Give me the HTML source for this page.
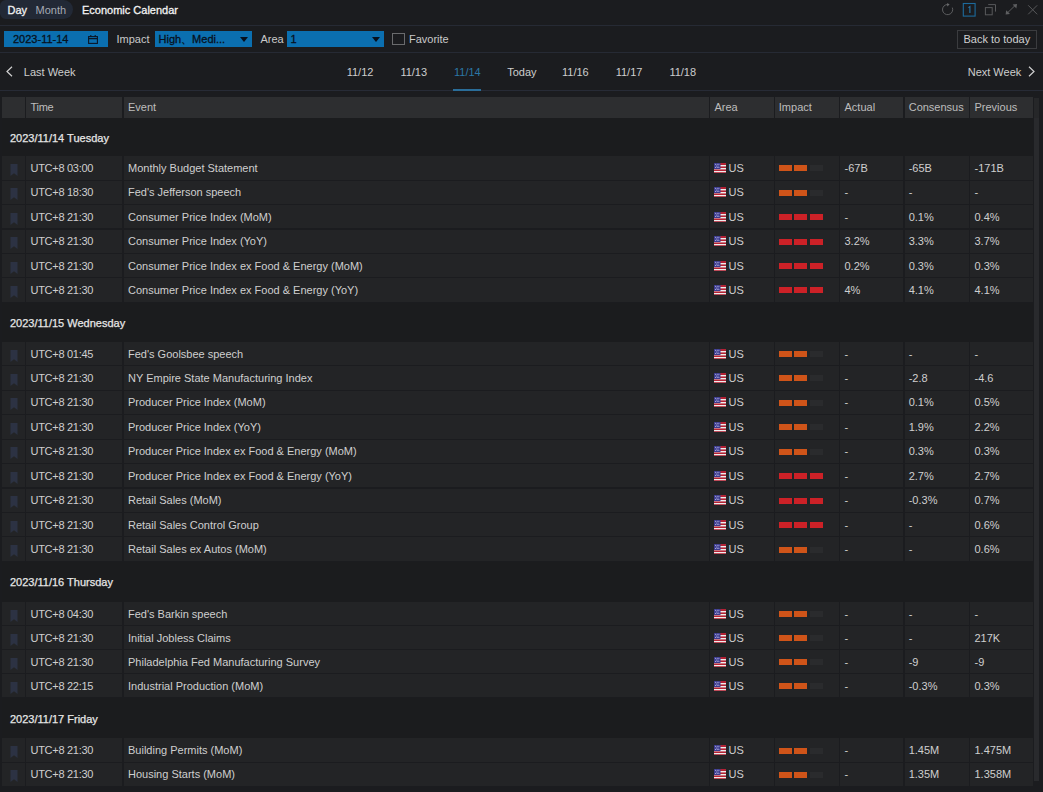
<!DOCTYPE html>
<html><head><meta charset="utf-8">
<style>
*{margin:0;padding:0;box-sizing:border-box}
html,body{width:1043px;height:792px;overflow:hidden;background:#1b1c1f;font-family:"Liberation Sans",sans-serif;font-size:11px;color:#cfcfcf}
.abs{position:absolute}
.hl{position:absolute;left:0;width:1043px;height:1px}
.pill{position:absolute;left:0;top:0;width:73px;height:19px;border-radius:6px 10px 10px 6px;background:#222936}
.tx{position:absolute;white-space:nowrap;line-height:13px}
.inp{position:absolute;background:#0b6fb0;height:16px;top:31px}
.inp .tx{color:#0b1a2e}
.tri{position:absolute;width:0;height:0;border-left:4px solid transparent;border-right:4px solid transparent;border-top:5px solid #07111e}
.tab{position:absolute;top:65.5px;white-space:nowrap;line-height:13px;color:#cdcdcd}
.hdr{position:absolute;top:97px;height:20.5px;left:0;width:1034px}
.hdr .c{background:#2d2e30;color:#bdbdbd}
.grp{position:absolute;left:2px;width:1031px;background:#1b1c1e}
.grp span{position:absolute;left:8px;line-height:14px;color:#e6e6e6;-webkit-text-stroke:0.25px #e6e6e6;white-space:nowrap}
.row{position:absolute;left:0;width:1034px}
.c{position:absolute;top:0;bottom:1px;background:#232426;white-space:nowrap;display:flex;align-items:center;padding-left:4.5px}
.hdr .c{bottom:0;padding-bottom:1.5px}
.c0{left:2px;width:23px}
.c1{left:26px;width:96px}
.c2{left:123.5px;width:585.5px}
.c3{left:710px;width:64px}
.c4{left:775px;width:64px}
.c5{left:840px;width:63px}
.c6{left:905px;width:64px;padding-left:3.7px}
.c7{left:970px;width:63px}
.c0 .bm{margin-left:3.5px;margin-top:4px}
.c1{letter-spacing:-0.28px}
.flag{margin-right:3px;margin-left:-1px;flex:none}
.c4{padding-left:3.8px}
.c4 i{display:inline-block;width:13px;height:6px;margin-right:2.5px;margin-top:1px}
.c4 i.o{background:#cf5419}
.c4 i.r{background:#cc2127}
.c4 i.g{background:#2a2b2d}
.sb{position:absolute;left:1034px;width:5px;background:#292a2d}
</style></head><body>
<!-- top bar -->
<div class="pill"></div>
<div class="tx" style="left:7.5px;top:4px;color:#f0f0f0;-webkit-text-stroke:0.3px #f0f0f0">Day</div>
<div class="tx" style="left:35.5px;top:4px;color:#a6aab4">Month</div>
<div class="tx" style="left:82px;top:4px;color:#f2f2f2;-webkit-text-stroke:0.3px #f2f2f2">Economic Calendar</div>
<svg class="abs" style="left:935px;top:0" width="108" height="20" viewBox="0 0 108 20">
 <path d="M17.3 7.6 A5.1 5.1 0 1 1 13 4.5" fill="none" stroke="#5c5d5f" stroke-width="1"/>
 <path d="M12.2 3 L14.6 4.6 L12.2 6.4 Z" fill="#6a6b6d"/>
 <rect x="28.3" y="3.5" width="11.8" height="12.6" fill="none" stroke="#1d6a9c" stroke-width="1.1"/>
 <path d="M33.4 7.6 L34.9 6.6 V13" fill="none" stroke="#2577ab" stroke-width="1.1"/>
 <rect x="50.4" y="7.6" width="6.8" height="7.2" fill="none" stroke="#58595b" stroke-width="1"/>
 <path d="M53.2 4.6 H60.5 V11.6" fill="none" stroke="#58595b" stroke-width="1"/>
 <path d="M72.5 12.8 L80 5.6" stroke="#5a5b5d" stroke-width="1"/>
 <path d="M82 4 L81.4 8.4 L77.6 4.6 Z" fill="#5e5f61"/>
 <path d="M70.6 14.6 L71.2 10.2 L75 14 Z" fill="#5e5f61"/>
 <path d="M93.2 5.3 L102.2 14.3 M102.2 5.3 L93.2 14.3" stroke="#58595b" stroke-width="1"/>
</svg>
<div class="hl" style="top:25px;background:#262a34"></div>
<!-- toolbar -->
<div class="inp" style="left:4px;width:104px"></div>
<div class="tx" style="left:13px;top:33px;color:#07111e;-webkit-text-stroke:0.3px #07111e">2023-11-14</div>
<svg class="abs" style="left:88px;top:35px" width="10" height="9" viewBox="0 0 10 9"><rect x="0.6" y="1.6" width="8.8" height="6.8" fill="none" stroke="#0b1626" stroke-width="1.1"/><path d="M0.6 3.6 H9.4 M2.8 0 V2 M7.2 0 V2" stroke="#0b1626" stroke-width="1.1"/></svg>
<div class="tx" style="left:116.5px;top:33px;color:#c9c9c9">Impact</div>
<div class="inp" style="left:155px;width:97px"></div>
<div class="tx" style="left:158.5px;top:33px;color:#07111e;-webkit-text-stroke:0.3px #07111e">High、Medi...</div>
<div class="tri" style="left:239.5px;top:37px"></div>
<div class="tx" style="left:260.5px;top:33px;color:#c9c9c9">Area</div>
<div class="inp" style="left:287px;width:97px"></div>
<div class="tx" style="left:290.5px;top:33px;color:#07111e;-webkit-text-stroke:0.3px #07111e">1</div>
<div class="tri" style="left:372px;top:37px"></div>
<div class="abs" style="left:392px;top:33px;width:13px;height:12px;border:1px solid #6a6b6d"></div>
<div class="tx" style="left:409px;top:33px;color:#c9c9c9">Favorite</div>
<div class="abs" style="left:957px;top:30px;width:80px;height:19px;border:1px solid #3b3c3f"></div>
<div class="tx" style="left:963.5px;top:33px;color:#d0d0d0">Back to today</div>
<div class="hl" style="top:52px;background:#262a34"></div>
<!-- nav -->
<svg class="abs" style="left:5px;top:66px" width="9" height="11" viewBox="0 0 9 11"><path d="M7 0.8 L2 5.5 L7 10.2" fill="none" stroke="#d0d0d0" stroke-width="1.2"/></svg>
<div class="tab" style="left:23.8px">Last Week</div>
<div class="tab" style="left:346.7px">11/12</div>
<div class="tab" style="left:400.4px">11/13</div>
<div class="tab" style="left:454px;color:#2b77a6">11/14</div>
<div class="tab" style="left:507.2px">Today</div>
<div class="tab" style="left:562px">11/16</div>
<div class="tab" style="left:615.7px">11/17</div>
<div class="tab" style="left:669.4px">11/18</div>
<div class="tab" style="left:967.7px">Next Week</div>
<svg class="abs" style="left:1027px;top:66px" width="9" height="11" viewBox="0 0 9 11"><path d="M2 0.8 L7 5.5 L2 10.2" fill="none" stroke="#d0d0d0" stroke-width="1.2"/></svg>
<div class="hl" style="top:90px;background:#272b36"></div>
<div class="abs" style="left:453px;top:89px;width:28px;height:2px;background:#2a6d99"></div>
<!-- table header -->
<div class="hdr">
 <div class="c c0"></div>
 <div class="c c1">Time</div>
 <div class="c c2">Event</div>
 <div class="c c3">Area</div>
 <div class="c c4">Impact</div>
 <div class="c c5">Actual</div>
 <div class="c c6">Consensus</div>
 <div class="c c7">Previous</div>
</div>
<div class="sb" style="top:97.5px;height:20px;background:#262729"></div>
<div class="sb" style="top:117.5px;height:663px"></div>
<div class="grp" style="top:117.50px;height:38.80px"><span style="top:13.00px">2023/11/14 Tuesday</span></div>
<div class="row" style="top:156.30px;height:24.40px"><div class="c c0"><svg class="bm" width="8" height="12" viewBox="0 0 8 12"><path d="M0.5 0H7.5V12L4 9.3L0.5 12Z" fill="#2c3243"/></svg></div><div class="c c1">UTC+8 03:00</div><div class="c c2">Monthly Budget Statement</div><div class="c c3"><svg class="flag" width="12" height="10" viewBox="0 0 12 10"><rect width="12" height="10" fill="#b22234"/><rect y="2" width="12" height="1.4" fill="#eee"/><rect y="5" width="12" height="1.4" fill="#eee"/><rect y="8" width="12" height="1.2" fill="#eee"/><rect width="6.5" height="6" fill="#3c3b8e"/><g fill="#c9c9f0"><circle cx="1.5" cy="1.3" r=".5"/><circle cx="3.2" cy="1.3" r=".5"/><circle cx="4.9" cy="1.3" r=".5"/><circle cx="2.3" cy="3" r=".5"/><circle cx="4" cy="3" r=".5"/><circle cx="1.5" cy="4.6" r=".5"/><circle cx="3.2" cy="4.6" r=".5"/><circle cx="4.9" cy="4.6" r=".5"/></g></svg><span>US</span></div><div class="c c4"><i class="o"></i><i class="o"></i><i class="g"></i></div><div class="c c5">-67B</div><div class="c c6">-65B</div><div class="c c7">-171B</div></div>
<div class="row" style="top:180.70px;height:24.40px"><div class="c c0"><svg class="bm" width="8" height="12" viewBox="0 0 8 12"><path d="M0.5 0H7.5V12L4 9.3L0.5 12Z" fill="#2c3243"/></svg></div><div class="c c1">UTC+8 18:30</div><div class="c c2">Fed's Jefferson speech</div><div class="c c3"><svg class="flag" width="12" height="10" viewBox="0 0 12 10"><rect width="12" height="10" fill="#b22234"/><rect y="2" width="12" height="1.4" fill="#eee"/><rect y="5" width="12" height="1.4" fill="#eee"/><rect y="8" width="12" height="1.2" fill="#eee"/><rect width="6.5" height="6" fill="#3c3b8e"/><g fill="#c9c9f0"><circle cx="1.5" cy="1.3" r=".5"/><circle cx="3.2" cy="1.3" r=".5"/><circle cx="4.9" cy="1.3" r=".5"/><circle cx="2.3" cy="3" r=".5"/><circle cx="4" cy="3" r=".5"/><circle cx="1.5" cy="4.6" r=".5"/><circle cx="3.2" cy="4.6" r=".5"/><circle cx="4.9" cy="4.6" r=".5"/></g></svg><span>US</span></div><div class="c c4"><i class="o"></i><i class="o"></i><i class="g"></i></div><div class="c c5">-</div><div class="c c6">-</div><div class="c c7">-</div></div>
<div class="row" style="top:205.10px;height:24.40px"><div class="c c0"><svg class="bm" width="8" height="12" viewBox="0 0 8 12"><path d="M0.5 0H7.5V12L4 9.3L0.5 12Z" fill="#2c3243"/></svg></div><div class="c c1">UTC+8 21:30</div><div class="c c2">Consumer Price Index (MoM)</div><div class="c c3"><svg class="flag" width="12" height="10" viewBox="0 0 12 10"><rect width="12" height="10" fill="#b22234"/><rect y="2" width="12" height="1.4" fill="#eee"/><rect y="5" width="12" height="1.4" fill="#eee"/><rect y="8" width="12" height="1.2" fill="#eee"/><rect width="6.5" height="6" fill="#3c3b8e"/><g fill="#c9c9f0"><circle cx="1.5" cy="1.3" r=".5"/><circle cx="3.2" cy="1.3" r=".5"/><circle cx="4.9" cy="1.3" r=".5"/><circle cx="2.3" cy="3" r=".5"/><circle cx="4" cy="3" r=".5"/><circle cx="1.5" cy="4.6" r=".5"/><circle cx="3.2" cy="4.6" r=".5"/><circle cx="4.9" cy="4.6" r=".5"/></g></svg><span>US</span></div><div class="c c4"><i class="r"></i><i class="r"></i><i class="r"></i></div><div class="c c5">-</div><div class="c c6">0.1%</div><div class="c c7">0.4%</div></div>
<div class="row" style="top:229.50px;height:24.40px"><div class="c c0"><svg class="bm" width="8" height="12" viewBox="0 0 8 12"><path d="M0.5 0H7.5V12L4 9.3L0.5 12Z" fill="#2c3243"/></svg></div><div class="c c1">UTC+8 21:30</div><div class="c c2">Consumer Price Index (YoY)</div><div class="c c3"><svg class="flag" width="12" height="10" viewBox="0 0 12 10"><rect width="12" height="10" fill="#b22234"/><rect y="2" width="12" height="1.4" fill="#eee"/><rect y="5" width="12" height="1.4" fill="#eee"/><rect y="8" width="12" height="1.2" fill="#eee"/><rect width="6.5" height="6" fill="#3c3b8e"/><g fill="#c9c9f0"><circle cx="1.5" cy="1.3" r=".5"/><circle cx="3.2" cy="1.3" r=".5"/><circle cx="4.9" cy="1.3" r=".5"/><circle cx="2.3" cy="3" r=".5"/><circle cx="4" cy="3" r=".5"/><circle cx="1.5" cy="4.6" r=".5"/><circle cx="3.2" cy="4.6" r=".5"/><circle cx="4.9" cy="4.6" r=".5"/></g></svg><span>US</span></div><div class="c c4"><i class="r"></i><i class="r"></i><i class="r"></i></div><div class="c c5">3.2%</div><div class="c c6">3.3%</div><div class="c c7">3.7%</div></div>
<div class="row" style="top:253.90px;height:24.40px"><div class="c c0"><svg class="bm" width="8" height="12" viewBox="0 0 8 12"><path d="M0.5 0H7.5V12L4 9.3L0.5 12Z" fill="#2c3243"/></svg></div><div class="c c1">UTC+8 21:30</div><div class="c c2">Consumer Price Index ex Food &amp; Energy (MoM)</div><div class="c c3"><svg class="flag" width="12" height="10" viewBox="0 0 12 10"><rect width="12" height="10" fill="#b22234"/><rect y="2" width="12" height="1.4" fill="#eee"/><rect y="5" width="12" height="1.4" fill="#eee"/><rect y="8" width="12" height="1.2" fill="#eee"/><rect width="6.5" height="6" fill="#3c3b8e"/><g fill="#c9c9f0"><circle cx="1.5" cy="1.3" r=".5"/><circle cx="3.2" cy="1.3" r=".5"/><circle cx="4.9" cy="1.3" r=".5"/><circle cx="2.3" cy="3" r=".5"/><circle cx="4" cy="3" r=".5"/><circle cx="1.5" cy="4.6" r=".5"/><circle cx="3.2" cy="4.6" r=".5"/><circle cx="4.9" cy="4.6" r=".5"/></g></svg><span>US</span></div><div class="c c4"><i class="r"></i><i class="r"></i><i class="r"></i></div><div class="c c5">0.2%</div><div class="c c6">0.3%</div><div class="c c7">0.3%</div></div>
<div class="row" style="top:278.30px;height:24.40px"><div class="c c0"><svg class="bm" width="8" height="12" viewBox="0 0 8 12"><path d="M0.5 0H7.5V12L4 9.3L0.5 12Z" fill="#2c3243"/></svg></div><div class="c c1">UTC+8 21:30</div><div class="c c2">Consumer Price Index ex Food &amp; Energy (YoY)</div><div class="c c3"><svg class="flag" width="12" height="10" viewBox="0 0 12 10"><rect width="12" height="10" fill="#b22234"/><rect y="2" width="12" height="1.4" fill="#eee"/><rect y="5" width="12" height="1.4" fill="#eee"/><rect y="8" width="12" height="1.2" fill="#eee"/><rect width="6.5" height="6" fill="#3c3b8e"/><g fill="#c9c9f0"><circle cx="1.5" cy="1.3" r=".5"/><circle cx="3.2" cy="1.3" r=".5"/><circle cx="4.9" cy="1.3" r=".5"/><circle cx="2.3" cy="3" r=".5"/><circle cx="4" cy="3" r=".5"/><circle cx="1.5" cy="4.6" r=".5"/><circle cx="3.2" cy="4.6" r=".5"/><circle cx="4.9" cy="4.6" r=".5"/></g></svg><span>US</span></div><div class="c c4"><i class="r"></i><i class="r"></i><i class="r"></i></div><div class="c c5">4%</div><div class="c c6">4.1%</div><div class="c c7">4.1%</div></div>
<div class="grp" style="top:302.50px;height:39.30px"><span style="top:13.00px">2023/11/15 Wednesday</span></div>
<div class="row" style="top:341.80px;height:24.45px"><div class="c c0"><svg class="bm" width="8" height="12" viewBox="0 0 8 12"><path d="M0.5 0H7.5V12L4 9.3L0.5 12Z" fill="#2c3243"/></svg></div><div class="c c1">UTC+8 01:45</div><div class="c c2">Fed's Goolsbee speech</div><div class="c c3"><svg class="flag" width="12" height="10" viewBox="0 0 12 10"><rect width="12" height="10" fill="#b22234"/><rect y="2" width="12" height="1.4" fill="#eee"/><rect y="5" width="12" height="1.4" fill="#eee"/><rect y="8" width="12" height="1.2" fill="#eee"/><rect width="6.5" height="6" fill="#3c3b8e"/><g fill="#c9c9f0"><circle cx="1.5" cy="1.3" r=".5"/><circle cx="3.2" cy="1.3" r=".5"/><circle cx="4.9" cy="1.3" r=".5"/><circle cx="2.3" cy="3" r=".5"/><circle cx="4" cy="3" r=".5"/><circle cx="1.5" cy="4.6" r=".5"/><circle cx="3.2" cy="4.6" r=".5"/><circle cx="4.9" cy="4.6" r=".5"/></g></svg><span>US</span></div><div class="c c4"><i class="o"></i><i class="o"></i><i class="g"></i></div><div class="c c5">-</div><div class="c c6">-</div><div class="c c7">-</div></div>
<div class="row" style="top:366.25px;height:24.45px"><div class="c c0"><svg class="bm" width="8" height="12" viewBox="0 0 8 12"><path d="M0.5 0H7.5V12L4 9.3L0.5 12Z" fill="#2c3243"/></svg></div><div class="c c1">UTC+8 21:30</div><div class="c c2">NY Empire State Manufacturing Index</div><div class="c c3"><svg class="flag" width="12" height="10" viewBox="0 0 12 10"><rect width="12" height="10" fill="#b22234"/><rect y="2" width="12" height="1.4" fill="#eee"/><rect y="5" width="12" height="1.4" fill="#eee"/><rect y="8" width="12" height="1.2" fill="#eee"/><rect width="6.5" height="6" fill="#3c3b8e"/><g fill="#c9c9f0"><circle cx="1.5" cy="1.3" r=".5"/><circle cx="3.2" cy="1.3" r=".5"/><circle cx="4.9" cy="1.3" r=".5"/><circle cx="2.3" cy="3" r=".5"/><circle cx="4" cy="3" r=".5"/><circle cx="1.5" cy="4.6" r=".5"/><circle cx="3.2" cy="4.6" r=".5"/><circle cx="4.9" cy="4.6" r=".5"/></g></svg><span>US</span></div><div class="c c4"><i class="o"></i><i class="o"></i><i class="g"></i></div><div class="c c5">-</div><div class="c c6">-2.8</div><div class="c c7">-4.6</div></div>
<div class="row" style="top:390.70px;height:24.45px"><div class="c c0"><svg class="bm" width="8" height="12" viewBox="0 0 8 12"><path d="M0.5 0H7.5V12L4 9.3L0.5 12Z" fill="#2c3243"/></svg></div><div class="c c1">UTC+8 21:30</div><div class="c c2">Producer Price Index (MoM)</div><div class="c c3"><svg class="flag" width="12" height="10" viewBox="0 0 12 10"><rect width="12" height="10" fill="#b22234"/><rect y="2" width="12" height="1.4" fill="#eee"/><rect y="5" width="12" height="1.4" fill="#eee"/><rect y="8" width="12" height="1.2" fill="#eee"/><rect width="6.5" height="6" fill="#3c3b8e"/><g fill="#c9c9f0"><circle cx="1.5" cy="1.3" r=".5"/><circle cx="3.2" cy="1.3" r=".5"/><circle cx="4.9" cy="1.3" r=".5"/><circle cx="2.3" cy="3" r=".5"/><circle cx="4" cy="3" r=".5"/><circle cx="1.5" cy="4.6" r=".5"/><circle cx="3.2" cy="4.6" r=".5"/><circle cx="4.9" cy="4.6" r=".5"/></g></svg><span>US</span></div><div class="c c4"><i class="o"></i><i class="o"></i><i class="g"></i></div><div class="c c5">-</div><div class="c c6">0.1%</div><div class="c c7">0.5%</div></div>
<div class="row" style="top:415.15px;height:24.45px"><div class="c c0"><svg class="bm" width="8" height="12" viewBox="0 0 8 12"><path d="M0.5 0H7.5V12L4 9.3L0.5 12Z" fill="#2c3243"/></svg></div><div class="c c1">UTC+8 21:30</div><div class="c c2">Producer Price Index (YoY)</div><div class="c c3"><svg class="flag" width="12" height="10" viewBox="0 0 12 10"><rect width="12" height="10" fill="#b22234"/><rect y="2" width="12" height="1.4" fill="#eee"/><rect y="5" width="12" height="1.4" fill="#eee"/><rect y="8" width="12" height="1.2" fill="#eee"/><rect width="6.5" height="6" fill="#3c3b8e"/><g fill="#c9c9f0"><circle cx="1.5" cy="1.3" r=".5"/><circle cx="3.2" cy="1.3" r=".5"/><circle cx="4.9" cy="1.3" r=".5"/><circle cx="2.3" cy="3" r=".5"/><circle cx="4" cy="3" r=".5"/><circle cx="1.5" cy="4.6" r=".5"/><circle cx="3.2" cy="4.6" r=".5"/><circle cx="4.9" cy="4.6" r=".5"/></g></svg><span>US</span></div><div class="c c4"><i class="o"></i><i class="o"></i><i class="g"></i></div><div class="c c5">-</div><div class="c c6">1.9%</div><div class="c c7">2.2%</div></div>
<div class="row" style="top:439.60px;height:24.45px"><div class="c c0"><svg class="bm" width="8" height="12" viewBox="0 0 8 12"><path d="M0.5 0H7.5V12L4 9.3L0.5 12Z" fill="#2c3243"/></svg></div><div class="c c1">UTC+8 21:30</div><div class="c c2">Producer Price Index ex Food &amp; Energy (MoM)</div><div class="c c3"><svg class="flag" width="12" height="10" viewBox="0 0 12 10"><rect width="12" height="10" fill="#b22234"/><rect y="2" width="12" height="1.4" fill="#eee"/><rect y="5" width="12" height="1.4" fill="#eee"/><rect y="8" width="12" height="1.2" fill="#eee"/><rect width="6.5" height="6" fill="#3c3b8e"/><g fill="#c9c9f0"><circle cx="1.5" cy="1.3" r=".5"/><circle cx="3.2" cy="1.3" r=".5"/><circle cx="4.9" cy="1.3" r=".5"/><circle cx="2.3" cy="3" r=".5"/><circle cx="4" cy="3" r=".5"/><circle cx="1.5" cy="4.6" r=".5"/><circle cx="3.2" cy="4.6" r=".5"/><circle cx="4.9" cy="4.6" r=".5"/></g></svg><span>US</span></div><div class="c c4"><i class="o"></i><i class="o"></i><i class="g"></i></div><div class="c c5">-</div><div class="c c6">0.3%</div><div class="c c7">0.3%</div></div>
<div class="row" style="top:464.05px;height:24.45px"><div class="c c0"><svg class="bm" width="8" height="12" viewBox="0 0 8 12"><path d="M0.5 0H7.5V12L4 9.3L0.5 12Z" fill="#2c3243"/></svg></div><div class="c c1">UTC+8 21:30</div><div class="c c2">Producer Price Index ex Food &amp; Energy (YoY)</div><div class="c c3"><svg class="flag" width="12" height="10" viewBox="0 0 12 10"><rect width="12" height="10" fill="#b22234"/><rect y="2" width="12" height="1.4" fill="#eee"/><rect y="5" width="12" height="1.4" fill="#eee"/><rect y="8" width="12" height="1.2" fill="#eee"/><rect width="6.5" height="6" fill="#3c3b8e"/><g fill="#c9c9f0"><circle cx="1.5" cy="1.3" r=".5"/><circle cx="3.2" cy="1.3" r=".5"/><circle cx="4.9" cy="1.3" r=".5"/><circle cx="2.3" cy="3" r=".5"/><circle cx="4" cy="3" r=".5"/><circle cx="1.5" cy="4.6" r=".5"/><circle cx="3.2" cy="4.6" r=".5"/><circle cx="4.9" cy="4.6" r=".5"/></g></svg><span>US</span></div><div class="c c4"><i class="r"></i><i class="r"></i><i class="r"></i></div><div class="c c5">-</div><div class="c c6">2.7%</div><div class="c c7">2.7%</div></div>
<div class="row" style="top:488.50px;height:24.45px"><div class="c c0"><svg class="bm" width="8" height="12" viewBox="0 0 8 12"><path d="M0.5 0H7.5V12L4 9.3L0.5 12Z" fill="#2c3243"/></svg></div><div class="c c1">UTC+8 21:30</div><div class="c c2">Retail Sales (MoM)</div><div class="c c3"><svg class="flag" width="12" height="10" viewBox="0 0 12 10"><rect width="12" height="10" fill="#b22234"/><rect y="2" width="12" height="1.4" fill="#eee"/><rect y="5" width="12" height="1.4" fill="#eee"/><rect y="8" width="12" height="1.2" fill="#eee"/><rect width="6.5" height="6" fill="#3c3b8e"/><g fill="#c9c9f0"><circle cx="1.5" cy="1.3" r=".5"/><circle cx="3.2" cy="1.3" r=".5"/><circle cx="4.9" cy="1.3" r=".5"/><circle cx="2.3" cy="3" r=".5"/><circle cx="4" cy="3" r=".5"/><circle cx="1.5" cy="4.6" r=".5"/><circle cx="3.2" cy="4.6" r=".5"/><circle cx="4.9" cy="4.6" r=".5"/></g></svg><span>US</span></div><div class="c c4"><i class="r"></i><i class="r"></i><i class="r"></i></div><div class="c c5">-</div><div class="c c6">-0.3%</div><div class="c c7">0.7%</div></div>
<div class="row" style="top:512.95px;height:24.45px"><div class="c c0"><svg class="bm" width="8" height="12" viewBox="0 0 8 12"><path d="M0.5 0H7.5V12L4 9.3L0.5 12Z" fill="#2c3243"/></svg></div><div class="c c1">UTC+8 21:30</div><div class="c c2">Retail Sales Control Group</div><div class="c c3"><svg class="flag" width="12" height="10" viewBox="0 0 12 10"><rect width="12" height="10" fill="#b22234"/><rect y="2" width="12" height="1.4" fill="#eee"/><rect y="5" width="12" height="1.4" fill="#eee"/><rect y="8" width="12" height="1.2" fill="#eee"/><rect width="6.5" height="6" fill="#3c3b8e"/><g fill="#c9c9f0"><circle cx="1.5" cy="1.3" r=".5"/><circle cx="3.2" cy="1.3" r=".5"/><circle cx="4.9" cy="1.3" r=".5"/><circle cx="2.3" cy="3" r=".5"/><circle cx="4" cy="3" r=".5"/><circle cx="1.5" cy="4.6" r=".5"/><circle cx="3.2" cy="4.6" r=".5"/><circle cx="4.9" cy="4.6" r=".5"/></g></svg><span>US</span></div><div class="c c4"><i class="r"></i><i class="r"></i><i class="r"></i></div><div class="c c5">-</div><div class="c c6">-</div><div class="c c7">0.6%</div></div>
<div class="row" style="top:537.40px;height:24.45px"><div class="c c0"><svg class="bm" width="8" height="12" viewBox="0 0 8 12"><path d="M0.5 0H7.5V12L4 9.3L0.5 12Z" fill="#2c3243"/></svg></div><div class="c c1">UTC+8 21:30</div><div class="c c2">Retail Sales ex Autos (MoM)</div><div class="c c3"><svg class="flag" width="12" height="10" viewBox="0 0 12 10"><rect width="12" height="10" fill="#b22234"/><rect y="2" width="12" height="1.4" fill="#eee"/><rect y="5" width="12" height="1.4" fill="#eee"/><rect y="8" width="12" height="1.2" fill="#eee"/><rect width="6.5" height="6" fill="#3c3b8e"/><g fill="#c9c9f0"><circle cx="1.5" cy="1.3" r=".5"/><circle cx="3.2" cy="1.3" r=".5"/><circle cx="4.9" cy="1.3" r=".5"/><circle cx="2.3" cy="3" r=".5"/><circle cx="4" cy="3" r=".5"/><circle cx="1.5" cy="4.6" r=".5"/><circle cx="3.2" cy="4.6" r=".5"/><circle cx="4.9" cy="4.6" r=".5"/></g></svg><span>US</span></div><div class="c c4"><i class="o"></i><i class="o"></i><i class="g"></i></div><div class="c c5">-</div><div class="c c6">-</div><div class="c c7">0.6%</div></div>
<div class="grp" style="top:562.00px;height:40.00px"><span style="top:13.00px">2023/11/16 Thursday</span></div>
<div class="row" style="top:602.00px;height:24.10px"><div class="c c0"><svg class="bm" width="8" height="12" viewBox="0 0 8 12"><path d="M0.5 0H7.5V12L4 9.3L0.5 12Z" fill="#2c3243"/></svg></div><div class="c c1">UTC+8 04:30</div><div class="c c2">Fed's Barkin speech</div><div class="c c3"><svg class="flag" width="12" height="10" viewBox="0 0 12 10"><rect width="12" height="10" fill="#b22234"/><rect y="2" width="12" height="1.4" fill="#eee"/><rect y="5" width="12" height="1.4" fill="#eee"/><rect y="8" width="12" height="1.2" fill="#eee"/><rect width="6.5" height="6" fill="#3c3b8e"/><g fill="#c9c9f0"><circle cx="1.5" cy="1.3" r=".5"/><circle cx="3.2" cy="1.3" r=".5"/><circle cx="4.9" cy="1.3" r=".5"/><circle cx="2.3" cy="3" r=".5"/><circle cx="4" cy="3" r=".5"/><circle cx="1.5" cy="4.6" r=".5"/><circle cx="3.2" cy="4.6" r=".5"/><circle cx="4.9" cy="4.6" r=".5"/></g></svg><span>US</span></div><div class="c c4"><i class="o"></i><i class="o"></i><i class="g"></i></div><div class="c c5">-</div><div class="c c6">-</div><div class="c c7">-</div></div>
<div class="row" style="top:626.10px;height:24.10px"><div class="c c0"><svg class="bm" width="8" height="12" viewBox="0 0 8 12"><path d="M0.5 0H7.5V12L4 9.3L0.5 12Z" fill="#2c3243"/></svg></div><div class="c c1">UTC+8 21:30</div><div class="c c2">Initial Jobless Claims</div><div class="c c3"><svg class="flag" width="12" height="10" viewBox="0 0 12 10"><rect width="12" height="10" fill="#b22234"/><rect y="2" width="12" height="1.4" fill="#eee"/><rect y="5" width="12" height="1.4" fill="#eee"/><rect y="8" width="12" height="1.2" fill="#eee"/><rect width="6.5" height="6" fill="#3c3b8e"/><g fill="#c9c9f0"><circle cx="1.5" cy="1.3" r=".5"/><circle cx="3.2" cy="1.3" r=".5"/><circle cx="4.9" cy="1.3" r=".5"/><circle cx="2.3" cy="3" r=".5"/><circle cx="4" cy="3" r=".5"/><circle cx="1.5" cy="4.6" r=".5"/><circle cx="3.2" cy="4.6" r=".5"/><circle cx="4.9" cy="4.6" r=".5"/></g></svg><span>US</span></div><div class="c c4"><i class="o"></i><i class="o"></i><i class="g"></i></div><div class="c c5">-</div><div class="c c6">-</div><div class="c c7">217K</div></div>
<div class="row" style="top:650.20px;height:24.10px"><div class="c c0"><svg class="bm" width="8" height="12" viewBox="0 0 8 12"><path d="M0.5 0H7.5V12L4 9.3L0.5 12Z" fill="#2c3243"/></svg></div><div class="c c1">UTC+8 21:30</div><div class="c c2">Philadelphia Fed Manufacturing Survey</div><div class="c c3"><svg class="flag" width="12" height="10" viewBox="0 0 12 10"><rect width="12" height="10" fill="#b22234"/><rect y="2" width="12" height="1.4" fill="#eee"/><rect y="5" width="12" height="1.4" fill="#eee"/><rect y="8" width="12" height="1.2" fill="#eee"/><rect width="6.5" height="6" fill="#3c3b8e"/><g fill="#c9c9f0"><circle cx="1.5" cy="1.3" r=".5"/><circle cx="3.2" cy="1.3" r=".5"/><circle cx="4.9" cy="1.3" r=".5"/><circle cx="2.3" cy="3" r=".5"/><circle cx="4" cy="3" r=".5"/><circle cx="1.5" cy="4.6" r=".5"/><circle cx="3.2" cy="4.6" r=".5"/><circle cx="4.9" cy="4.6" r=".5"/></g></svg><span>US</span></div><div class="c c4"><i class="o"></i><i class="o"></i><i class="g"></i></div><div class="c c5">-</div><div class="c c6">-9</div><div class="c c7">-9</div></div>
<div class="row" style="top:674.30px;height:24.10px"><div class="c c0"><svg class="bm" width="8" height="12" viewBox="0 0 8 12"><path d="M0.5 0H7.5V12L4 9.3L0.5 12Z" fill="#2c3243"/></svg></div><div class="c c1">UTC+8 22:15</div><div class="c c2">Industrial Production (MoM)</div><div class="c c3"><svg class="flag" width="12" height="10" viewBox="0 0 12 10"><rect width="12" height="10" fill="#b22234"/><rect y="2" width="12" height="1.4" fill="#eee"/><rect y="5" width="12" height="1.4" fill="#eee"/><rect y="8" width="12" height="1.2" fill="#eee"/><rect width="6.5" height="6" fill="#3c3b8e"/><g fill="#c9c9f0"><circle cx="1.5" cy="1.3" r=".5"/><circle cx="3.2" cy="1.3" r=".5"/><circle cx="4.9" cy="1.3" r=".5"/><circle cx="2.3" cy="3" r=".5"/><circle cx="4" cy="3" r=".5"/><circle cx="1.5" cy="4.6" r=".5"/><circle cx="3.2" cy="4.6" r=".5"/><circle cx="4.9" cy="4.6" r=".5"/></g></svg><span>US</span></div><div class="c c4"><i class="o"></i><i class="o"></i><i class="g"></i></div><div class="c c5">-</div><div class="c c6">-0.3%</div><div class="c c7">0.3%</div></div>
<div class="grp" style="top:698.40px;height:40.00px"><span style="top:14.00px">2023/11/17 Friday</span></div>
<div class="row" style="top:738.40px;height:24.40px"><div class="c c0"><svg class="bm" width="8" height="12" viewBox="0 0 8 12"><path d="M0.5 0H7.5V12L4 9.3L0.5 12Z" fill="#2c3243"/></svg></div><div class="c c1">UTC+8 21:30</div><div class="c c2">Building Permits (MoM)</div><div class="c c3"><svg class="flag" width="12" height="10" viewBox="0 0 12 10"><rect width="12" height="10" fill="#b22234"/><rect y="2" width="12" height="1.4" fill="#eee"/><rect y="5" width="12" height="1.4" fill="#eee"/><rect y="8" width="12" height="1.2" fill="#eee"/><rect width="6.5" height="6" fill="#3c3b8e"/><g fill="#c9c9f0"><circle cx="1.5" cy="1.3" r=".5"/><circle cx="3.2" cy="1.3" r=".5"/><circle cx="4.9" cy="1.3" r=".5"/><circle cx="2.3" cy="3" r=".5"/><circle cx="4" cy="3" r=".5"/><circle cx="1.5" cy="4.6" r=".5"/><circle cx="3.2" cy="4.6" r=".5"/><circle cx="4.9" cy="4.6" r=".5"/></g></svg><span>US</span></div><div class="c c4"><i class="o"></i><i class="o"></i><i class="g"></i></div><div class="c c5">-</div><div class="c c6">1.45M</div><div class="c c7">1.475M</div></div>
<div class="row" style="top:762.80px;height:24.40px"><div class="c c0"><svg class="bm" width="8" height="12" viewBox="0 0 8 12"><path d="M0.5 0H7.5V12L4 9.3L0.5 12Z" fill="#2c3243"/></svg></div><div class="c c1">UTC+8 21:30</div><div class="c c2">Housing Starts (MoM)</div><div class="c c3"><svg class="flag" width="12" height="10" viewBox="0 0 12 10"><rect width="12" height="10" fill="#b22234"/><rect y="2" width="12" height="1.4" fill="#eee"/><rect y="5" width="12" height="1.4" fill="#eee"/><rect y="8" width="12" height="1.2" fill="#eee"/><rect width="6.5" height="6" fill="#3c3b8e"/><g fill="#c9c9f0"><circle cx="1.5" cy="1.3" r=".5"/><circle cx="3.2" cy="1.3" r=".5"/><circle cx="4.9" cy="1.3" r=".5"/><circle cx="2.3" cy="3" r=".5"/><circle cx="4" cy="3" r=".5"/><circle cx="1.5" cy="4.6" r=".5"/><circle cx="3.2" cy="4.6" r=".5"/><circle cx="4.9" cy="4.6" r=".5"/></g></svg><span>US</span></div><div class="c c4"><i class="o"></i><i class="o"></i><i class="g"></i></div><div class="c c5">-</div><div class="c c6">1.35M</div><div class="c c7">1.358M</div></div>
</body></html>
